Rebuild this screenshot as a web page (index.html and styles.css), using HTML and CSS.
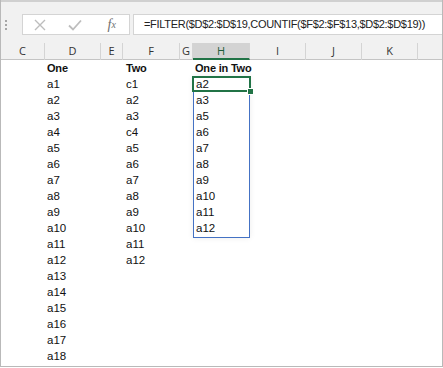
FILE: index.html
```html
<!DOCTYPE html>
<html lang="en">
<head>
    <meta charset="UTF-8">
    <meta name="viewport" content="width=device-width, initial-scale=1.0">
    <title>FILTER with COUNTIF</title>
    <link rel="stylesheet" href="styles.css">
</head>
<body>
    <div class="window">
        <div class="toolbar">
            <div class="grip">
                <span></span><span></span><span></span>
            </div>
            <div class="edit-box">
                <span class="tool-icon">
                    <svg width="12" height="12" viewBox="0 0 12 12"><path d="M1 1 L11 11 M11 1 L1 11" stroke="#bdbdbd" stroke-width="1.4" fill="none"/></svg>
                </span>
                <span class="tool-icon">
                    <svg width="14" height="12" viewBox="0 0 14 12"><path d="M1 6.5 L5 10.5 L13 1.5" stroke="#bdbdbd" stroke-width="1.8" fill="none"/></svg>
                </span>
                <span class="tool-icon fx">f<sub>x</sub></span>
            </div>
            <div class="formula">=FILTER($D$2:$D$19,COUNTIF($F$2:$F$13,$D$2:$D$19))</div>
        </div>

        <div class="col-headers">
            <div class="col-head">C</div>
            <div class="col-head">D</div>
            <div class="col-head">E</div>
            <div class="col-head">F</div>
            <div class="col-head">G</div>
            <div class="col-head selected">H</div>
            <div class="col-head">I</div>
            <div class="col-head">J</div>
            <div class="col-head">K</div>
            <div class="col-head last"></div>
        </div>

        <div class="sheet">
            <div class="column col-d">
                <div class="cell title">One</div>
                <div class="cell">a1</div>
                <div class="cell">a2</div>
                <div class="cell">a3</div>
                <div class="cell">a4</div>
                <div class="cell">a5</div>
                <div class="cell">a6</div>
                <div class="cell">a7</div>
                <div class="cell">a8</div>
                <div class="cell">a9</div>
                <div class="cell">a10</div>
                <div class="cell">a11</div>
                <div class="cell">a12</div>
                <div class="cell">a13</div>
                <div class="cell">a14</div>
                <div class="cell">a15</div>
                <div class="cell">a16</div>
                <div class="cell">a17</div>
                <div class="cell">a18</div>
            </div>
            <div class="column col-f">
                <div class="cell title">Two</div>
                <div class="cell">c1</div>
                <div class="cell">a2</div>
                <div class="cell">a3</div>
                <div class="cell">c4</div>
                <div class="cell">a5</div>
                <div class="cell">a6</div>
                <div class="cell">a7</div>
                <div class="cell">a8</div>
                <div class="cell">a9</div>
                <div class="cell">a10</div>
                <div class="cell">a11</div>
                <div class="cell">a12</div>
            </div>
            <div class="column col-h">
                <div class="cell title">One in Two</div>
                <div class="spill">
                    <div class="active"><span class="handle"></span></div>
                    <div class="cell">a2</div>
                    <div class="cell">a3</div>
                    <div class="cell">a5</div>
                    <div class="cell">a6</div>
                    <div class="cell">a7</div>
                    <div class="cell">a8</div>
                    <div class="cell">a9</div>
                    <div class="cell">a10</div>
                    <div class="cell">a11</div>
                    <div class="cell">a12</div>
                </div>
            </div>
        </div>
    </div>
</body>
</html>
```

FILE: styles.css
```css
body {
    margin: 0;
    font-family: "Liberation Sans", Arial, sans-serif;
    background: #fff;
}

.window {
    width: 441px;
    height: 366px;
    border-left: 1px solid #b9b9b9;
    border-right: 1px solid #b9b9b9;
    border-bottom: 1px solid #b9b9b9;
    overflow: hidden;
}

.toolbar {
    height: 43px;
    border-top: 2px solid #d0d0d0;
    background: #f1f1f1;
    display: flex;
    align-items: flex-start;
    box-sizing: border-box;
    padding-top: 12px;
}

.grip {
    width: 21px;
    height: 21px;
    display: flex;
    flex-direction: column;
    align-items: center;
    justify-content: center;
    gap: 2px;
    margin-left: -6px;
}

.grip span {
    width: 2px;
    height: 2px;
    background: #a6a6a6;
}

.edit-box {
    width: 106px;
    height: 19px;
    margin-left: 6px;
    border: 1px solid #d4d4d4;
    background: #fff;
    display: flex;
    align-items: center;
}

.tool-icon {
    display: flex;
    align-items: center;
    justify-content: center;
    width: 36px;
}

.fx {
    font-family: "Liberation Serif", serif;
    font-style: italic;
    font-size: 14px;
    color: #707070;
    padding-left: 2px;
}

.fx sub {
    font-size: 10px;
    vertical-align: -1px;
}

.formula {
    flex: 1;
    height: 19px;
    margin-left: 3px;
    border: 1px solid #d4d4d4;
    border-right: none;
    background: #fff;
    font-size: 11px;
    letter-spacing: -0.3px;
    line-height: 19px;
    padding-left: 10px;
    color: #222;
    white-space: nowrap;
}

.col-headers {
    display: grid;
    grid-template-columns: 44px 56px 22px 57px 13px 57px 56px 56px 56px 1fr;
    height: 16px;
    background: #f1f1f1;
    border-bottom: 1px solid #c4c4c4;
}

.col-head {
    border-right: 1px solid #d4d4d4;
    font-family: "Open Sans", sans-serif;
    font-size: 11px;
    line-height: 16px;
    text-align: center;
    color: #333;
}

.col-head.selected {
    background: #d3d3d3;
    border-bottom: 2px solid #217346;
    line-height: 15px;
    color: #1f5c3a;
}

.col-head.last {
    border-right: none;
}

.sheet {
    display: grid;
    grid-template-columns: 44px 56px 22px 57px 13px 57px 56px 56px 56px 1fr;
}

.column {
    display: flex;
    flex-direction: column;
}

.col-d {
    grid-column: 2;
}

.col-f {
    grid-column: 4;
}

.col-h {
    grid-column: 6;
}

.cell {
    height: 16px;
    line-height: 16px;
    font-size: 11.5px;
    color: #111;
    padding-left: 2px;
    white-space: nowrap;
}

.cell.title {
    font-weight: bold;
    font-size: 11px;
    letter-spacing: -0.2px;
}

.col-f .cell {
    padding-left: 3px;
}

.spill {
    position: relative;
    border: 1px solid #4472c4;
    width: 55px;
    box-shadow: 0 0 6px rgba(0, 0, 0, 0.08);
}

.spill .cell {
    height: 16px;
    line-height: 15px;
}

.active {
    position: absolute;
    left: -2px;
    top: -1px;
    width: 55px;
    height: 12px;
    border: 2px solid #217346;
}

.handle {
    position: absolute;
    right: -5px;
    bottom: -5px;
    width: 5px;
    height: 5px;
    background: #217346;
    border: 1px solid #fff;
}
```
